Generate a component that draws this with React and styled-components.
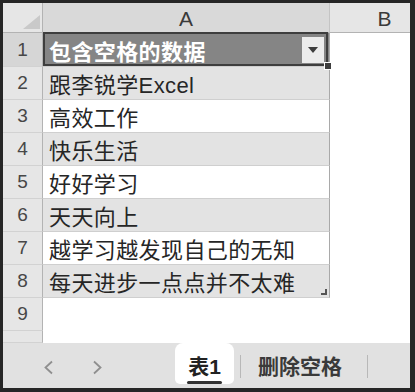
import React from 'react'
import styled, { createGlobalStyle } from 'styled-components'

const GlobalStyle = createGlobalStyle`
  html, body {
    margin: 0;
    padding: 0;
    background: #fff;
  }
  body {
    font-family: "Liberation Sans", "Noto Sans CJK SC", sans-serif;
  }
`

const rows = [
  '跟李锐学Excel',
  '高效工作',
  '快乐生活',
  '好好学习',
  '天天向上',
  '越学习越发现自己的无知',
  '每天进步一点点并不太难',
]

function App() {
  return (
    <>
      <GlobalStyle />
      <Frame>
        <Sheet>
          <Corner>
            <svg width="40" height="30" viewBox="0 0 40 30">
              <polygon points="20,26 37,12 37,26" fill="#c9c9c9" />
            </svg>
          </Corner>
          <ColHead selected>A</ColHead>
          <ColHead>B</ColHead>

          <RowHead selected>1</RowHead>
          <Cell variant="title">
            包含空格的数据
            <DropButton>
              <svg width="10" height="6" viewBox="0 0 10 6">
                <polygon points="0,0 10,0 5,6" fill="#3d3d3d" />
              </svg>
            </DropButton>
            <Selection />
            <FillHandle />
          </Cell>
          <Blank />

          {rows.map((text, i) => (
            <React.Fragment key={text}>
              <RowHead>{i + 2}</RowHead>
              <Cell variant={i % 2 === 0 ? 'band' : 'plain'}>
                {text}
                {i === rows.length - 1 && <ResizeMark />}
              </Cell>
              <Blank />
            </React.Fragment>
          ))}

          <RowHead>9</RowHead>
          <Blank />
          <Blank />
          <RowHead />
          <Blank />
          <Blank />
        </Sheet>

        <TabBar>
          <Nav>
            <Arrow>
              <svg width="11" height="15" viewBox="0 0 11 15">
                <polyline points="9,1.5 2.5,7.5 9,13.5" fill="none" stroke="#8f8f8f" strokeWidth="1.8" />
              </svg>
            </Arrow>
            <Arrow>
              <svg width="11" height="15" viewBox="0 0 11 15">
                <polyline points="2,1.5 8.5,7.5 2,13.5" fill="none" stroke="#8f8f8f" strokeWidth="1.8" />
              </svg>
            </Arrow>
          </Nav>
          <ActiveTab>
            <TabLabel>表1</TabLabel>
            <Underline />
          </ActiveTab>
          <Divider />
          <Tab>删除空格</Tab>
          <Divider />
        </TabBar>
      </Frame>
    </>
  )
}

export default App

const Frame = styled.div`
  width: 415px;
  height: 392px;
  box-sizing: border-box;
  border-style: solid;
  border-color: #262626;
  border-width: 3px 5px 4px 3px;
  display: flex;
  flex-direction: column;
  overflow: hidden;
  background: #fff;
`

const Sheet = styled.div`
  display: grid;
  grid-template-columns: 40px 287px 110px;
  grid-template-rows: 30px 34px repeat(8, 33px) 12px;
  width: 407px;
  overflow: hidden;
  flex: none;
`

const Corner = styled.div`
  background: #e6e6e6;
  border-right: 1px solid #b3b3b3;
  border-bottom: 1px solid #b3b3b3;
  box-sizing: border-box;
  svg {
    display: block;
  }
`

const ColHead = styled.div`
  background: ${props => (props.selected ? '#d9d9d9' : '#e6e6e6')};
  border-bottom: 1px solid #b3b3b3;
  border-right: 1px solid #c4c4c4;
  box-sizing: border-box;
  display: flex;
  align-items: center;
  justify-content: center;
  font-size: 21px;
  color: #3a3a3a;
  padding-top: 3px;
`

const RowHead = styled.div`
  background: ${props => (props.selected ? '#d6d6d6' : '#e6e6e6')};
  border-right: 1px solid #b3b3b3;
  border-bottom: 1px solid #d2d2d2;
  box-sizing: border-box;
  display: flex;
  align-items: center;
  justify-content: center;
  font-size: 19px;
  color: #474747;
`

const cellColors = {
  title: '#858585',
  band: '#e3e3e3',
  plain: '#ffffff',
}

const Cell = styled.div`
  position: relative;
  box-sizing: border-box;
  background: ${props => cellColors[props.variant]};
  color: ${props => (props.variant === 'title' ? '#fff' : '#262626')};
  font-weight: ${props => (props.variant === 'title' ? 700 : 400)};
  border-bottom: 1px solid #cfcfcf;
  border-right: 1px solid #a9a9a9;
  display: flex;
  align-items: center;
  padding-left: 6px;
  font-size: 22px;
  letter-spacing: 0.4px;
  white-space: nowrap;
`

const Blank = styled.div`
  background: #fff;
`

const DropButton = styled.div`
  position: absolute;
  right: 5px;
  top: 4px;
  width: 22px;
  height: 26px;
  background: #ececec;
  display: flex;
  align-items: center;
  justify-content: center;
  svg {
    display: block;
  }
`

const Selection = styled.div`
  position: absolute;
  z-index: 2;
  top: -1px;
  left: 0;
  right: 1px;
  bottom: 0;
  border: 2px solid #3e3e3e;
  pointer-events: none;
`

const FillHandle = styled.div`
  position: absolute;
  z-index: 3;
  right: -3px;
  bottom: -4px;
  width: 6px;
  height: 6px;
  background: #3e3e3e;
  border: 1px solid #fff;
`

const ResizeMark = styled.div`
  position: absolute;
  right: 2px;
  bottom: 2px;
  width: 4px;
  height: 4px;
  border-right: 2px solid #555;
  border-bottom: 2px solid #555;
`

const TabBar = styled.div`
  flex: 1;
  background: #e1e1e1;
  display: flex;
  align-items: flex-start;
  font-family: "Liberation Sans", "Noto Sans CJK SC", sans-serif;
`

const Nav = styled.div`
  width: 172px;
  height: 48px;
  display: flex;
  align-items: center;
  gap: 38px;
  padding-left: 40px;
  box-sizing: border-box;
`

const Arrow = styled.div`
  width: 11px;
  height: 15px;
  svg {
    display: block;
  }
`

const ActiveTab = styled.div`
  width: 59px;
  height: 41px;
  background: #fff;
  border-radius: 8px 8px 5px 5px;
  display: flex;
  flex-direction: column;
  align-items: center;
  padding-top: 12px;
  box-sizing: border-box;
`

const TabLabel = styled.div`
  font-size: 21px;
  line-height: 24px;
  font-weight: 700;
  color: #222;
`

const Underline = styled.div`
  width: 35px;
  height: 3px;
  margin-top: 2px;
  border-radius: 2px;
  background: #333;
`

const Divider = styled.div`
  width: 1px;
  height: 23px;
  margin: 12px 0 0 6px;
  background: #b8b8b8;
`

const Tab = styled.div`
  padding: 12px 19px 0 17px;
  font-size: 21px;
  line-height: 24px;
  font-weight: 700;
  color: #3a3a3a;
`
